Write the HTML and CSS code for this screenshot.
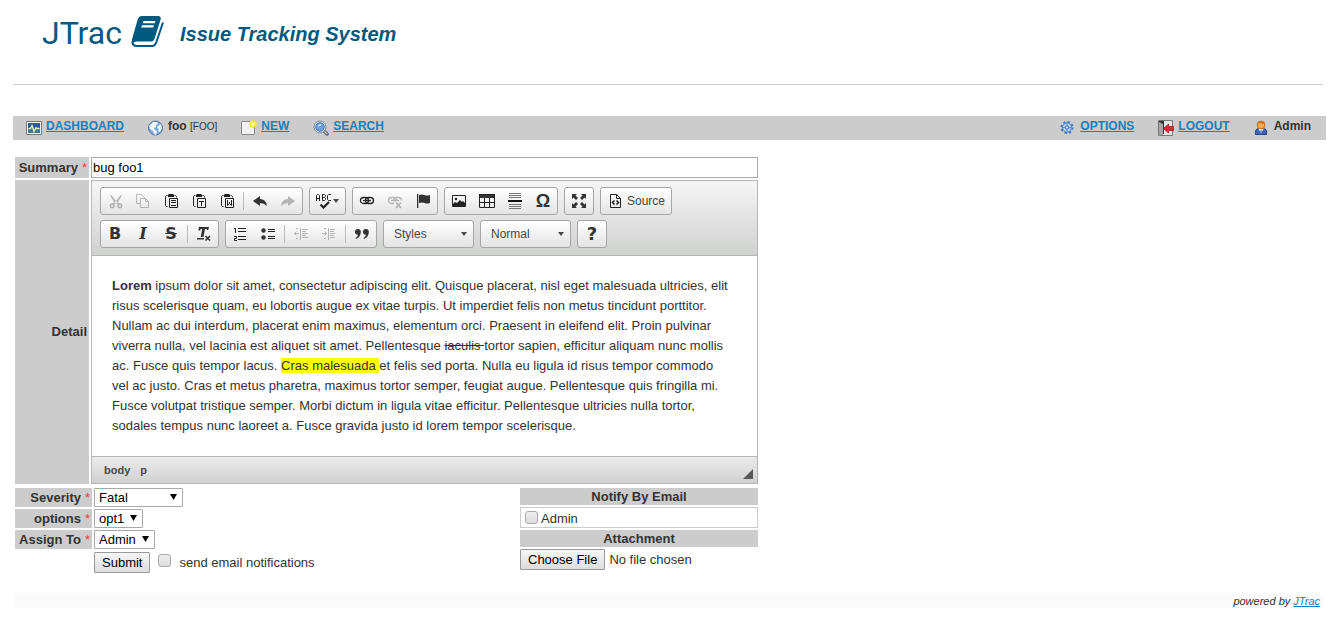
FILE: index.html
```html
<!DOCTYPE html>
<html lang="en">
<head>
<meta charset="utf-8">
<title>JTrac</title>
<link rel="stylesheet" href="styles.css">
</head>
<body>
<header class="masthead">
  <span class="brand">JTrac</span>
  <svg class="brand-icon" viewBox="0 0 33 31" aria-hidden="true"><path fill-rule="evenodd" d="M11 0h16q3.500 0 2.600 3.500L23.500 23q-.8 2.500-3.500 2.500H6q-3 0-4 1.500-1.500-1-1-3.500L6.500 4Q7.500 0 11 0zM12.500 5l-.8 2.300h12l.8-2.300zM11 9.300l-.8 2.300h12l.8-2.300z"/><path fill="none" stroke="#005a80" stroke-width="2" d="M1.500 25q-.5 5 4.500 5h15q3 0 4-3l7-20.500"/></svg>
  <h1 class="tagline">Issue Tracking System</h1>
</header>

<nav class="nav">
  <div class="nav-group">
    <span class="nav-item">
      <svg class="nav-icon" viewBox="0 0 16 16" aria-hidden="true"><path fill="#f4f4f0" stroke="#777" d="M.5 1.500h15v13H.5z"/><path fill="#2b5a8c" d="M2 3h12v10H2z"/><path fill="#3f7a8a" d="M2 8h12v5H2z"/><path fill="none" stroke="#e8f6c0" stroke-width="1.300" d="M2.500 8.500h2l1.500-3 2 6 2-4 1 1h2.500"/></svg>
      <a href="#">DASHBOARD</a>
    </span>
    <span class="nav-item">
      <svg class="nav-icon" viewBox="0 0 16 16" aria-hidden="true"><circle cx="7.500" cy="8" r="7" fill="#7ea5da" stroke="#5374a8"/><path fill="#eef5fd" d="M2 5l3-3 4 0 1 2-2 1 0 2-2 1 1 2 2 1-1 4-2-1-1-3-3-2-1-3zM10 6l3-2 1 4-2 4-2-1 1-2-2-1z"/></svg>
      <span>foo <small class="code">[FOO]</small></span>
    </span>
    <span class="nav-item">
      <svg class="nav-icon" viewBox="0 0 16 16" aria-hidden="true"><path fill="#f1f1f1" stroke="#888" d="M.5 1.500h13v13H.5z"/><circle cx="12" cy="4" r="3.500" fill="#f7ee3a"/><path stroke="#f9e926" d="M12 0v8M8 4h8M9.200 1.200l5.600 5.600M14.800 1.200L9.200 6.800"/><circle cx="12" cy="4" r="1.500" fill="#fffcc0"/></svg>
      <a href="#">NEW</a>
    </span>
    <span class="nav-item">
      <svg class="nav-icon" viewBox="0 0 16 16" aria-hidden="true"><path stroke="#666" stroke-width="3.500" stroke-linecap="round" d="M11 11l3 3"/><path stroke="#ccc" stroke-width="1.200" d="M11.500 11.500l2.500 2.500"/><circle cx="7" cy="7" r="6" fill="#dce6f2" stroke="#808b9b"/><circle cx="7" cy="7" r="4.300" fill="#6f9fe0" stroke="#4b79b8"/><path fill="#cfe2fa" d="M4.500 6.500q1-3 4-2.500l-1 2z"/></svg>
      <a href="#">SEARCH</a>
    </span>
  </div>
  <div class="nav-group">
    <span class="nav-item">
      <svg class="nav-icon" viewBox="0 0 16 16" aria-hidden="true"><circle cx="7" cy="7.500" r="5.500" fill="none" stroke="#3e74bd" stroke-width="2" stroke-dasharray="2.300 2"/><circle cx="7" cy="7.500" r="4.500" fill="#bdd5f4" stroke="#4b82ca"/><path stroke="#5e92d4" d="M7 3v9M2.500 7.500h9"/><circle cx="7" cy="7.500" r="1.700" fill="#d7e6f8" stroke="#356cb5"/></svg>
      <a href="#">OPTIONS</a>
    </span>
    <span class="nav-item">
      <svg class="nav-icon" viewBox="0 0 16 16" aria-hidden="true"><path fill="#e6e6e2" stroke="#777" d="M.5.5h14v15H.5z"/><path fill="#333" d="M1 1h5v13H5l-4 2z"/><path fill="#a5a5a5" d="M1 2l4 2v10l-4 2z"/><path fill="#df2630" stroke="#a70f18" stroke-width=".7" d="M5.500 8.500l5-4.500v2.500h5v4h-5V13z"/></svg>
      <a href="#">LOGOUT</a>
    </span>
    <span class="nav-item">
      <svg class="nav-icon" viewBox="0 0 16 16" aria-hidden="true"><path fill="#3c62b5" stroke="#2a3f7e" d="M1.500 14.500q-1-5.500 3-6h5q4 .5 3 6z"/><path fill="#fff" d="M4.500 9h5L7 13z"/><path fill="#5b84cc" d="M6.500 10h1l.5 3-1 1.500-1-1.500z"/><circle cx="7" cy="5" r="3.900" fill="#f3ac51" stroke="#c0701b"/><path fill="#c9751c" d="M3.300 4q.5-3 3.700-3t3.700 3q-4 0-5-1z"/></svg>
      <span>Admin</span>
    </span>
  </div>
</nav>

<main>
<form class="form" onsubmit="return false">
  <div class="fields">
    <label class="label" for="summary">Summary <span class="req">*</span></label>
    <input class="summary" id="summary" type="text" value="bug foo1">
    <span class="label label-detail" id="detail-label">Detail</span>
    <div class="editor">
      <div class="toolbar" role="toolbar" aria-labelledby="detail-label">
        <div class="tool-row">
          <div class="tools">
            <button type="button" class="tool off" aria-label="Cut"><svg viewBox="0 0 16 16"><path fill="#444" d="M3.500 1l5.500 7 4 3-1 1-5-3-3.500-6zM14.500 1L9 8l-4 3 1 1 5-3 3.500-6z"/><g fill="none" stroke="#444" stroke-width="1.500"><circle cx="5.200" cy="12.800" r="1.800"/><circle cx="12.800" cy="12.800" r="1.800"/></g></svg></button>
            <button type="button" class="tool off" aria-label="Copy"><svg viewBox="0 0 16 16"><path fill="none" stroke="#444" d="M5 10.500H1.500v-9h5l3 3M5.500 5.500h5l3 3v6h-8zM10.500 5.500v3h3"/></svg></button>
            <button type="button" class="tool" aria-label="Paste"><svg viewBox="0 0 16 16"><g fill="none" stroke="#222"><path d="M4.500 13.500h-1l-1-1v-9l1-1h1M11.500 2.500h1l1 1v1M6.500 5.500h8v9h-8zM8 7.500h5M8 9.500h5M8 12.500h5"/></g><path fill="#222" d="M5 2l1-1h4l1 1v2H5z"/></svg></button>
            <button type="button" class="tool" aria-label="Paste as plain text"><svg viewBox="0 0 16 16"><g fill="none" stroke="#222"><path d="M4.500 13.500h-1l-1-1v-9l1-1h1M11.500 2.500h1l1 1v1M6.500 5.500h8v9h-8zM8 8.500h5M10.500 8v5"/></g><path fill="#222" d="M5 2l1-1h4l1 1v2H5z"/></svg></button>
            <button type="button" class="tool" aria-label="Paste from Word"><svg viewBox="0 0 16 16"><g fill="none" stroke="#222"><path d="M4.500 13.500h-1l-1-1v-9l1-1h1M11.500 2.500h1l1 1v1M6.500 5.500h8v9h-8zM8.500 7v5.500l2-2 2 2V7M10.500 9v2"/></g><path fill="#222" d="M5 2l1-1h4l1 1v2H5z"/></svg></button>
            <span class="sep"></span>
            <button type="button" class="tool" aria-label="Undo"><svg viewBox="0 0 16 16"><path fill="#333" d="M1 8l7-5v3q6 0 7 7-3-3-7-3v3z"/></svg></button>
            <button type="button" class="tool off" aria-label="Redo"><svg viewBox="0 0 16 16"><path fill="#444" d="M15 8L8 3v3q-6 0-7 7 3-3 7-3v3z"/></svg></button>
          </div>
          <div class="tools">
            <button type="button" class="tool tool-menu" aria-label="Spell check"><svg viewBox="0 0 16 16"><path fill="none" stroke="#222" d="M.5 8V2.500l1-1h1l1 1V8M.5 5.500h3M6.500 7.500v-6h2l1 1v1l-1 1h-2 2l1 1v1l-1 1zM15 1.500h-2.500l-1 1v4l1 1H15"/><path fill="none" stroke="#222" stroke-width="2.200" d="M4.500 11.500l3 3 5.500-5.500"/></svg><i class="caret"></i></button>
          </div>
          <div class="tools">
            <button type="button" class="tool" aria-label="Link"><svg viewBox="0 0 16 16"><g fill="none" stroke="#222" stroke-width="1.300"><rect x="1.500" y="4.500" width="8" height="6" rx="3"/><rect x="6.500" y="4.500" width="8" height="6" rx="3"/><path d="M4 7.500h8"/></g></svg></button>
            <button type="button" class="tool off" aria-label="Unlink"><svg viewBox="0 0 16 16"><g fill="none" stroke="#444" stroke-width="1.300"><path d="M7 10.500H4.500a3 3 0 0 1 0-6h2a3 3 0 0 1 3 3M6.500 7.500a3 3 0 0 1 3-3h2a3 3 0 0 1 3 3M4 7.500h8"/><path stroke-width="1.700" d="M9 9.500l5 5.500M14 9.500L9 15"/></g></svg></button>
            <button type="button" class="tool" aria-label="Anchor"><svg viewBox="0 0 16 16"><path fill="#333" d="M2 1h1.300v14H2zM4 2q3-1 5.500 0t5.500 0v8q-3 1-5.500 0T4 10z"/></svg></button>
          </div>
          <div class="tools">
            <button type="button" class="tool" aria-label="Image"><svg viewBox="0 0 16 16"><path fill="none" stroke="#222" d="M1.500 2.500h13v11h-13z"/><path fill="#222" d="M2 13v-2l2-2 2 1 3-3 2 2 1-1 2 2v3z"/><circle cx="5" cy="6" r="1.200" fill="#222"/></svg></button>
            <button type="button" class="tool" aria-label="Table"><svg viewBox="0 0 16 16"><path fill="#333" d="M0 1h16v4H0z"/><path fill="none" stroke="#222" d="M.5 1.500h15v13H.5zM.5 9.500h15M5.500 5v9M10.500 5v9"/></svg></button>
            <button type="button" class="tool" aria-label="Horizontal line"><svg viewBox="0 0 16 16"><path stroke="#777" d="M2 .5h12M2 2.500h12M2 4.500h12M2 11.500h12M2 13.500h12M2 15.500h12"/><path fill="#111" d="M1 7h14v2H1z"/></svg></button>
            <button type="button" class="tool glyph omega" aria-label="Special character">Ω</button>
          </div>
          <div class="tools">
            <button type="button" class="tool" aria-label="Maximize"><svg viewBox="0 0 16 16"><path fill="#333" d="M1 1h5L4.500 2.500 7 5 5 7 2.500 4.500 1 6zM15 1v5l-1.500-1.500L11 7 9 5l2.500-2.500L10 1zM1 15v-5l1.500 1.500L5 9l2 2-2.500 2.500L6 15zM15 15h-5l1.500-1.500L9 11l2-2 2.500 2.500L15 10z"/></svg></button>
          </div>
          <div class="tools">
            <button type="button" class="tool tool-text"><svg viewBox="0 0 16 16" aria-hidden="true"><path fill="none" stroke="#222" d="M3.500 1.500h6l4 4v9h-10zM9.500 1.500v4h4"/><path fill="none" stroke="#222" stroke-width="1.500" d="M7.500 7.500l-2 2 2 2M9.500 7.500l2 2-2 2"/></svg>Source</button>
          </div>
        </div>
        <div class="tool-row">
          <div class="tools">
            <button type="button" class="tool glyph" aria-label="Bold"><b>B</b></button>
            <button type="button" class="tool glyph italic" aria-label="Italic"><i>I</i></button>
            <button type="button" class="tool glyph" aria-label="Strikethrough"><s>S</s></button>
            <span class="sep"></span>
            <button type="button" class="tool" aria-label="Remove format"><svg viewBox="0 0 16 16"><path fill="#333" d="M3 1h10l-.7 3h-1.500L11 3H9L7.500 11H4.700L6.200 3H4.700L4 4.500H2.300zM1 12h7v1.500H1z"/><path stroke="#333" stroke-width="1.600" d="M9.500 10l4.500 4.500M14 10l-4.500 4.500"/></svg></button>
          </div>
          <div class="tools">
            <button type="button" class="tool" aria-label="Numbered list"><svg viewBox="0 0 16 16"><path fill="none" stroke="#222" d="M2 2.500h1.500V7M2 10.500h2.500v2H2.500v2H5"/><path fill="#222" d="M6 2h8v1H6zM6 5h8v1H6zM6 10h8v1H6zM6 13h8v1H6z"/></svg></button>
            <button type="button" class="tool" aria-label="Bulleted list"><svg viewBox="0 0 16 16"><circle cx="3.500" cy="4.500" r="2.200" fill="#333"/><circle cx="3.500" cy="11.500" r="2.200" fill="#333"/><path fill="#222" d="M8 3h7v1H8zM8 5h7v1H8zM8 10h7v1H8zM8 12h7v1H8z"/></svg></button>
            <span class="sep"></span>
            <button type="button" class="tool off" aria-label="Decrease indent"><svg viewBox="0 0 16 16"><path fill="none" stroke="#444" d="M7.500 2v12M9 3.500h6M9 5.500h4M9 7.500h6M9 9.500h4M9 11.500h6M1 7.500h5M3.500 5.500l-2 2 2 2M3 2.500h2M3 12.500h2"/></svg></button>
            <button type="button" class="tool off" aria-label="Increase indent"><svg viewBox="0 0 16 16"><path fill="none" stroke="#444" d="M7.500 2v12M9 3.500h5M9 5.500h4M9 7.500h5M9 9.500h4M9 11.500h5M1 7.500h5M3.500 5.500l2 2-2 2M3 2.500h2M3 12.500h2"/></svg></button>
            <span class="sep"></span>
            <button type="button" class="tool" aria-label="Block quote"><svg viewBox="0 0 16 16"><path fill="#333" d="M1 6a2.800 2.800 0 0 1 5.800 0q0 5-4.800 7l-.5-1q2.500-1.500 2.500-3.200Q1 8.800 1 6zM9 6a2.800 2.800 0 0 1 5.800 0q0 5-4.800 7l-.5-1q2.500-1.500 2.500-3.200Q9 8.800 9 6z"/></svg></button>
          </div>
          <button type="button" class="combo">Styles<i class="caret"></i></button>
          <button type="button" class="combo">Normal<i class="caret"></i></button>
          <div class="tools">
            <button type="button" class="tool glyph help" aria-label="About">?</button>
          </div>
        </div>
      </div>
      <div class="content" contenteditable="true" spellcheck="false" role="textbox" aria-labelledby="detail-label">
        <p><strong>Lorem</strong> ipsum dolor sit amet, consectetur adipiscing elit. Quisque placerat, nisl eget malesuada ultricies, elit risus scelerisque quam, eu lobortis augue ex vitae turpis. Ut imperdiet felis non metus tincidunt porttitor. Nullam ac dui interdum, placerat enim maximus, elementum orci. Praesent in eleifend elit. Proin pulvinar viverra nulla, vel lacinia est aliquet sit amet. Pellentesque <s>iaculis </s>tortor sapien, efficitur aliquam nunc mollis ac. Fusce quis tempor lacus. <mark>Cras malesuada </mark>et felis sed porta. Nulla eu ligula id risus tempor commodo vel ac justo. Cras et metus pharetra, maximus tortor semper, feugiat augue. Pellentesque quis fringilla mi. Fusce volutpat tristique semper. Morbi dictum in ligula vitae efficitur. Pellentesque ultricies nulla tortor, sodales tempus nunc laoreet a. Fusce gravida justo id lorem tempor scelerisque.</p>
      </div>
      <div class="status">
        <span class="path"><span>body</span><span>p</span></span>
        <span class="grip"></span>
      </div>
    </div>
  </div>

  <div class="lower">
    <div class="props">
      <label class="label" for="severity">Severity <span class="req">*</span></label>
      <span class="select select-wide"><select id="severity"><option>Fatal</option></select></span>
      <label class="label" for="options">options <span class="req">*</span></label>
      <span class="select select-short"><select id="options"><option>opt1</option></select></span>
      <label class="label" for="assign">Assign To <span class="req">*</span></label>
      <span class="select select-mid"><select id="assign"><option>Admin</option></select></span>
      <div class="actions">
        <button type="submit" class="btn">Submit</button>
        <input type="checkbox" class="check" id="send"><label for="send">send email notifications</label>
      </div>
    </div>
    <div class="side">
      <div class="side-title">Notify By Email</div>
      <div class="notify"><input type="checkbox" class="check" id="notify"><label for="notify">Admin</label></div>
      <label class="side-title" for="file">Attachment</label>
      <input class="file" id="file" type="file">
    </div>
  </div>
</form>
</main>

<footer class="footer">powered by <a href="#">JTrac</a></footer>
</body>
</html>
```
FILE: styles.css
```css
* { box-sizing: border-box; }
body {
  margin: 0;
  padding: 0 12px 0 13px;
  background: #fff;
  color: #333;
  font: 13px/16px "Liberation Sans", Arial, sans-serif;
}
a { color: #1a7fbb; }
button, input, select { font: inherit; }

.masthead {
  display: flex;
  align-items: center;
  height: 85px;
  margin-right: 3px;
  padding: 0 0 22px 29px;
  border-bottom: 1px solid #ccc;
  color: #005a80;
}
.brand { padding-top: 4px; font: 32px/40px Roboto, sans-serif; }
.brand-icon { width: 33px; height: 31px; margin-left: 9px; fill: #005a80; }
.tagline { margin: 6px 0 0 16px; font-size: 20px; line-height: 24px; font-style: italic; }

.nav {
  display: flex;
  justify-content: space-between;
  height: 24px;
  margin-top: 31px;
  padding: 0 15px 0 13px;
  background: #ccc;
  font-size: 12px;
  font-weight: bold;
}
.nav-group { display: flex; gap: 24px; }
.nav-item { display: flex; gap: 4px; padding-top: 2px; }
.nav-icon { width: 16px; height: 16px; margin-top: 2px; }
.code { font-size: 10px; font-weight: normal; }

.form { width: 100%; max-width: 745px; margin-top: 17px; padding-left: 2px; }
.fields { display: grid; grid-template-columns: 74px 1fr; gap: 2px; }
.label {
  display: flex;
  align-items: center;
  justify-content: flex-end;
  gap: 4px;
  padding-right: 2px;
  background: #ccc;
  font-weight: bold;
}
.req { color: #f33; font-weight: normal; }
.summary {
  width: 100%;
  height: 21px;
  margin: 0;
  padding: 0 1px;
  border: 1px solid #a9a9a9;
  color: #000;
}

.editor { border: 1px solid #b6b6b6; }
.toolbar {
  padding: 6px 8px 2px;
  border-bottom: 1px solid #b6b6b6;
  background: linear-gradient(#f5f5f5, #cfd1cf);
}
.tool-row { display: flex; flex-wrap: wrap; gap: 0 6px; margin-bottom: 5px; }
.tools, .combo {
  display: flex;
  align-items: center;
  height: 28px;
  border: 1px solid #a6a6a6;
  border-radius: 3px;
  background: linear-gradient(#fff, #e4e4e4);
}
.tool {
  display: flex;
  align-items: center;
  justify-content: center;
  width: 28px;
  height: 26px;
  padding: 0;
  border: 0;
  background: none;
  color: #333;
}
.tool svg { width: 16px; height: 16px; }
.off svg { opacity: .35; }
.tool-menu { width: 35px; gap: 1px; }
.tool-text { width: 70px; gap: 4px; color: #474747; font-size: 12px; }
.glyph { font: bold 16px/20px "DejaVu Sans", sans-serif; }
.italic { font-family: "DejaVu Serif", serif; }
.omega { font: bold 18px/20px "Liberation Sans", sans-serif; }
.help { font-size: 18px; }
.sep { width: 1px; height: 18px; margin: 0 2px; background: #bbb; }
.caret {
  width: 6px;
  height: 4px;
  background: #474747;
  clip-path: polygon(0 0, 100% 0, 50% 100%);
}
.combo {
  justify-content: space-between;
  width: 91px;
  padding: 0 6px 0 10px;
  color: #474747;
  font-size: 12px;
}
.content { padding: 20px 26px 20px 20px; line-height: 20px; outline: none; }
.content p { margin: 0; }
.content mark { background: #ff0; color: inherit; }
.status {
  display: flex;
  justify-content: space-between;
  align-items: center;
  height: 27px;
  padding: 0 4px 0 12px;
  border-top: 1px solid #b6b6b6;
  background: linear-gradient(#ebebeb, #cfd1cf);
  color: #484848;
  font-size: 11px;
  font-weight: bold;
}
.path { display: flex; gap: 10px; }
.grip {
  align-self: flex-end;
  width: 10px;
  height: 10px;
  margin-bottom: 4px;
  background: #5a5a5a;
  clip-path: polygon(100% 0, 100% 100%, 0 100%);
}

.lower { display: flex; justify-content: space-between; margin-top: 4px; }
.props {
  display: grid;
  grid-template-columns: 77px auto;
  grid-auto-rows: 19px;
  gap: 2px;
}
.select { position: relative; height: 19px; }
.select select {
  width: 100%;
  height: 19px;
  padding: 0 4px;
  border: 1px solid #a9a9a9;
  border-radius: 1px;
  appearance: none;
  background: #fff;
  color: #000;
}
.select::after {
  content: "";
  position: absolute;
  top: 6px;
  right: 6px;
  width: 7px;
  height: 6px;
  background: #000;
  clip-path: polygon(0 0, 100% 0, 50% 100%);
  pointer-events: none;
}
.select-wide { width: 89px; }
.select-short { width: 49px; }
.select-mid { width: 61px; }
.actions {
  grid-column: 2;
  display: flex;
  align-items: center;
  height: 23px;
}
.btn, .file::file-selector-button {
  height: 21px;
  padding: 0 7px;
  border: 1px solid #999;
  border-radius: 1px;
  background: linear-gradient(#f6f6f6, #ddd);
  color: #000;
  font: inherit;
}
.check {
  width: 13px;
  height: 13px;
  margin: 0;
  border: 1px solid #a9a9a9;
  border-radius: 3px;
  appearance: none;
  background: linear-gradient(#eee, #dcdcdc);
}
.actions .check { margin: 0 8px 4px; }
.side { display: grid; align-content: start; gap: 2px; width: 238px; }
.side-title {
  height: 17px;
  background: #ccc;
  line-height: 17px;
  font-weight: bold;
  text-align: center;
}
.notify { display: flex; gap: 3px; height: 21px; padding: 3px 4px 0; border: 1px solid #ccc; }
.file { width: 100%; height: 21px; }
.file::file-selector-button { margin: 0 4px 0 0; }

.footer {
  margin: 24px 3px 0 2px;
  padding-right: 3px;
  background: #fafafa;
  font-size: 11px;
  line-height: 14px;
  font-style: italic;
  text-align: right;
}
```
